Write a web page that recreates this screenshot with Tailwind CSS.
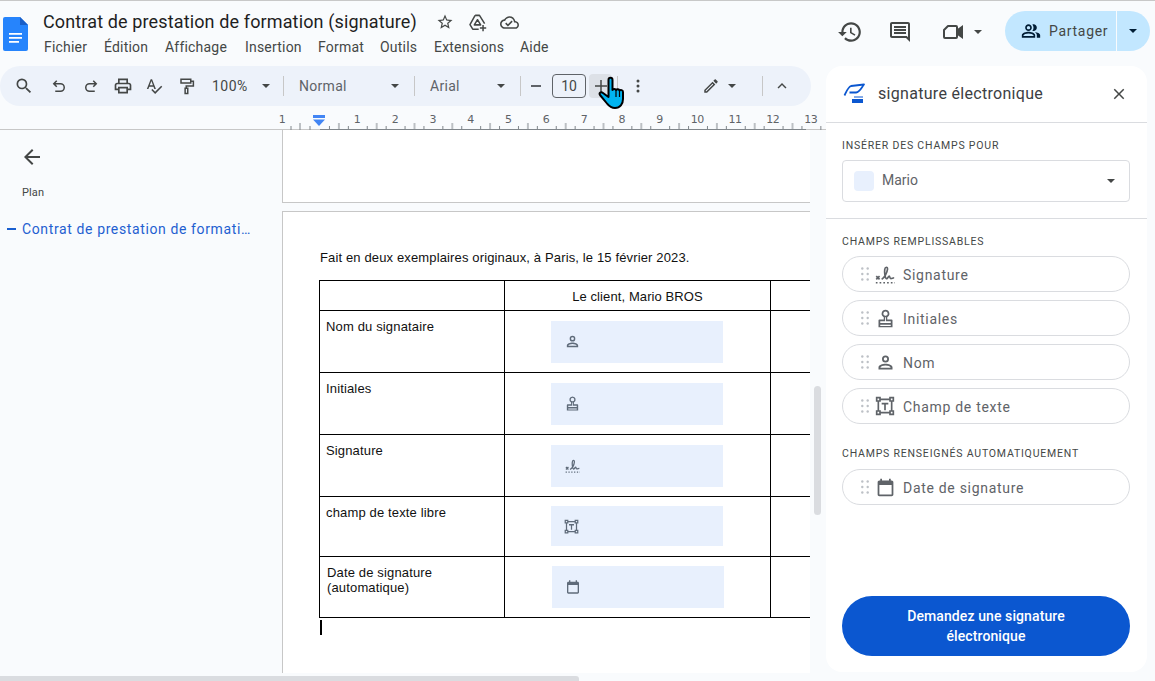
<!DOCTYPE html>
<html lang="fr">
<head>
<meta charset="utf-8">
<script src="https://cdn.jsdelivr.net/npm/@tailwindcss/browser@4"></script>
</head>
<body class="m-0">
<svg class="hidden" aria-hidden="true">
  <symbol id="caret" viewBox="0 0 8 4"><path d="M0 0h8L4 4z"/></symbol>
  <symbol id="person" viewBox="0 0 24 24"><path d="M12 4a4 4 0 1 1 0 8 4 4 0 0 1 0-8zm0 2a2 2 0 1 0 0 4 2 2 0 0 0 0-4zM12 13.500c3.500 0 8 1.600 8 4V20H4v-2.500c0-2.400 4.500-4 8-4zm0 2c-3 0-5.400 1-5.900 2.500h11.800c-.5-1.500-2.900-2.500-5.900-2.500z"/></symbol>
  <symbol id="stamp" viewBox="0 0 24 24"><path d="M12 2a4.500 4.500 0 0 1 2 8.500V13h5a1 1 0 0 1 1 1v8H4v-8a1 1 0 0 1 1-1h5v-2.500A4.500 4.500 0 0 1 12 2zm0 2a2.500 2.500 0 0 0-.5 4.950h1A2.500 2.500 0 0 0 12 4zM11.500 10.500V15H6v2h12v-2h-5.500v-4.500zM6 19v1.500h12V19z"/></symbol>
  <symbol id="sign" viewBox="0 0 24 24"><path d="M1.500 14.500l4 4M5.500 14.500l-4 4" fill="none" stroke="currentColor" stroke-width="2"/><path d="M8 18.500c3-2 6.500-7.500 7-12 .3-3.500-2.800-3.500-3.300 0-.5 3.500.3 10 1.800 11 1.500 1 2.500-3 3.500-3s.5 3 2 3 2.500-1 4-1" fill="none" stroke="currentColor" stroke-width="2"/><path d="M1 22.500h23" fill="none" stroke="currentColor" stroke-width="2" stroke-dasharray="2 2.500"/></symbol>
  <symbol id="textbox" viewBox="0 0 24 24"><path d="M1 1h6v2h10V1h6v6h-2v10h2v6h-6v-2H7v2H1v-6h2V7H1zm2 2v2h2V3zm16 0v2h2V3zM5 7v10h2v2h10v-2h2V7h-2V5H7v2zm-2 12v2h2v-2zm16 0v2h2v-2z"/><path d="M8 8h8v2.200h-3V17h-2v-6.800H8z"/></symbol>
  <symbol id="calendar" viewBox="0 0 24 24"><path d="M19 4h-1V2h-2v2H8V2H6v2H5c-1.100 0-2 .9-2 2v14c0 1.100.9 2 2 2h14c1.100 0 2-.9 2-2V6c0-1.100-.9-2-2-2zm0 16H5V9h14v11z"/></symbol>
  <symbol id="grip" viewBox="0 0 8 14"><g fill="currentColor"><circle cx="1.300" cy="1.500" r="1.200"/><circle cx="6.700" cy="1.500" r="1.200"/><circle cx="1.300" cy="7" r="1.200"/><circle cx="6.700" cy="7" r="1.200"/><circle cx="1.300" cy="12.500" r="1.200"/><circle cx="6.700" cy="12.500" r="1.200"/></g></symbol>
</svg>

<div class="relative w-[1155px] h-[681px] overflow-hidden bg-[#f9fbfd] border-t border-[#c8c8c8] text-[#444746] font-['Roboto',sans-serif] flex flex-col">

  <!-- Header -->
  <header class="h-[65px] shrink-0 flex items-start">
    <svg class="w-[25px] h-[34px] ml-[3px] mt-[16px] shrink-0" viewBox="0 0 25 34"><path d="M2 0h15l8 8v24a2 2 0 0 1-2 2H2a2 2 0 0 1-2-2V2a2 2 0 0 1 2-2z" fill="#2684fc"/><path d="M17 0l8 8h-8z" fill="#1a5fc8"/><path d="M6 16h13v1.700H6zM6 20h13v1.700H6zM6 24h10v1.700H6z" fill="#fff"/></svg>
    <div class="ml-[15px] w-[520px] shrink-0">
      <div class="flex items-center h-[24px] mt-[9px]">
        <span class="text-[18px] leading-[24px] tracking-[0.13px] text-[#1f1f1f] whitespace-nowrap w-[375px]">Contrat de prestation de formation (signature)</span>
        <svg class="w-[18px] h-[18px] ml-[18px] fill-[#444746]" viewBox="0 0 24 24"><path d="M22 9.240l-7.190-.62L12 2 9.190 8.630 2 9.240l5.460 4.730L5.820 21 12 17.270 18.180 21l-1.630-7.030L22 9.240zM12 15.400l-3.760 2.270 1-4.280-3.320-2.880 4.380-.38L12 6.100l1.710 4.040 4.380.38-3.320 2.880 1 4.280L12 15.400z"/></svg>
        <svg class="w-[19px] h-[19px] ml-[14px]" viewBox="0 0 24 24" fill="none" stroke="#444746" stroke-width="1.900" stroke-linejoin="round"><path d="M9 3h5.500L21 13.500M13.500 20.500H6l-3.500-5.700L9 3"/><path d="M12 8.500l4 6.500H8z"/><path d="M19 15v8M15 19h8"/></svg>
        <svg class="w-[19px] h-[19px] ml-[13px] fill-[#444746]" viewBox="0 0 24 24"><path d="M19.350 10.040C18.670 6.590 15.640 4 12 4 9.110 4 6.600 5.640 5.350 8.040 2.340 8.360 0 10.910 0 14c0 3.310 2.690 6 6 6h13c2.760 0 5-2.240 5-5 0-2.640-2.050-4.780-4.650-4.960zM19 18H6c-2.210 0-4-1.790-4-4 0-2.050 1.530-3.760 3.560-3.970l1.070-.11.5-.95C8.080 7.140 9.940 6 12 6c2.620 0 4.880 1.860 5.390 4.430l.3 1.500 1.530.11c1.560.1 2.780 1.410 2.780 2.960 0 1.650-1.350 3-3 3zm-9-3.820l-2.090-2.090L6.500 13.500 10 17l6.010-6.010-1.410-1.410z"/></svg>
      </div>
      <nav class="flex text-[14px] leading-[20px] text-[#444746] mt-[3px] ml-[1px] tracking-[0.2px]">
        <span class="w-[60px]">Fichier</span><span class="w-[61px]">Édition</span><span class="w-[80px]">Affichage</span><span class="w-[73px]">Insertion</span><span class="w-[62px]">Format</span><span class="w-[54px]">Outils</span><span class="w-[86px]">Extensions</span><span>Aide</span>
      </nav>
    </div>
    <div class="ml-[274px] mt-[18px] flex items-center">
      <svg class="w-[26px] h-[26px] fill-[#444746]" viewBox="0 0 24 24"><path d="M13 3c-4.970 0-9 4.030-9 9H1l3.890 3.890.07.14L9 12H6c0-3.870 3.130-7 7-7s7 3.130 7 7-3.130 7-7 7c-1.930 0-3.680-.79-4.940-2.060l-1.420 1.420C8.270 19.990 10.510 21 13 21c4.970 0 9-4.030 9-9s-4.030-9-9-9zm-1 5v5l4.280 2.540.72-1.210-3.500-2.080V8H12z"/></svg>
      <svg class="w-[24px] h-[24px] ml-[25px] fill-[#444746]" viewBox="0 0 24 24"><path d="M21.990 4c0-1.100-.89-2-1.990-2H4c-1.100 0-2 .9-2 2v12c0 1.100.9 2 2 2h14l4 4-.01-18zM20 4v13.170L18.830 16H4V4h16zM6 12h12v2H6zm0-3h12v2H6zm0-3h12v2H6z"/></svg>
      <svg class="w-[24px] h-[24px] ml-[29px]" viewBox="0 0 24 24" fill="none" stroke="#444746" stroke-width="2"><path d="M7 6h8a1 1 0 0 1 1 1v10a1 1 0 0 1-1 1H4a1 1 0 0 1-1-1v-7z" stroke-linejoin="round"/><path d="M16 10.500L21 7v10l-5-3.500z" fill="#444746"/></svg>
      <svg class="w-[8px] h-[4px] ml-[9px] fill-[#444746]"><use href="#caret"/></svg>
    </div>
    <div class="ml-[23px] mt-[10px] h-[40px] w-[145px] shrink-0 rounded-full bg-[#c2e7ff] flex items-center text-[#001d35]">
      <svg class="w-[20px] h-[20px] ml-[16px] fill-[#001d35]" viewBox="0 0 24 24"><path d="M16.670 13.130C18.040 14.060 19 15.320 19 17v3h4v-3c0-2.180-3.570-3.470-6.330-3.870zM15 12c2.210 0 4-1.790 4-4s-1.790-4-4-4c-.47 0-.91.1-1.330.26C14.500 5.230 15 6.560 15 8s-.5 2.770-1.330 3.740c.42.16.86.26 1.330.26zM9 12c2.210 0 4-1.790 4-4s-1.790-4-4-4-4 1.790-4 4 1.790 4 4 4zm0-6c1.100 0 2 .9 2 2s-.9 2-2 2-2-.9-2-2 .9-2 2-2zM9 13c-2.670 0-8 1.340-8 4v3h16v-3c0-2.660-5.330-4-8-4zm6 5H3v-.99C3.200 16.290 6.300 15 9 15s5.800 1.290 6 2v1z"/></svg>
      <span class="ml-[8px] w-[67px] text-[14px] tracking-[0.7px] text-[#444746]">Partager</span>
      <span class="w-px h-[40px] bg-[#f9fbfd]"></span>
      <svg class="w-[8px] h-[4px] ml-[12px] fill-[#001d35]"><use href="#caret"/></svg>
    </div>
  </header>

  <!-- Body -->
  <div class="flex-1 flex min-h-0">
    <div class="w-[826px] shrink-0 flex flex-col min-h-0">
      <!-- Toolbar -->
      <div class="w-[811px] h-[40px] shrink-0 rounded-full bg-[#edf2fa] flex items-center text-[14px]">
        <svg class="w-[20px] h-[20px] ml-[14px] fill-[#444746]" viewBox="0 0 24 24"><path d="M15.500 14h-.79l-.28-.27A6.471 6.471 0 0 0 16 9.500 6.500 6.500 0 1 0 9.500 16c1.610 0 3.090-.59 4.230-1.570l.27.28v.79l5 4.990L20.490 19l-4.990-5zm-6 0C7.010 14 5 11.990 5 9.500S7.010 5 9.500 5 14 7.010 14 9.500 11.990 14 9.500 14z"/></svg>
        <svg class="w-[18px] h-[18px] ml-[16px]" viewBox="0 0 24 24" fill="none" stroke="#444746" stroke-width="2"><path d="M9 5L5 9l4 4M5 9h9a5 5 0 0 1 0 10H7"/></svg>
        <svg class="w-[18px] h-[18px] ml-[14px]" viewBox="0 0 24 24" fill="none" stroke="#444746" stroke-width="2"><path d="M15 5l4 4-4 4M19 9h-9a5 5 0 0 0 0 10h7"/></svg>
        <svg class="w-[20px] h-[20px] ml-[13px] fill-[#444746]" viewBox="0 0 24 24"><path d="M19 8h-1V3H6v5H5c-1.660 0-3 1.340-3 3v6h4v4h12v-4h4v-6c0-1.660-1.340-3-3-3zM8 5h8v3H8V5zm8 12v2H8v-4h8v2zm2-2v-2H6v2H4v-4c0-.55.45-1 1-1h14c.55 0 1 .45 1 1v4h-2z"/></svg>
        <svg class="w-[18px] h-[18px] ml-[12px] fill-[#444746]" viewBox="0 0 24 24"><path d="M12.450 16h2.090L9.430 3H7.570L2.460 16h2.090l1.120-3h5.640l1.140 3zm-6.020-5L8.500 5.480 10.570 11H6.430zm15.160.59l-8.090 8.090L9.830 16l-1.410 1.410 5.090 5.090L23 13l-1.410-1.410z"/></svg>
        <svg class="w-[18px] h-[18px] ml-[15px]" viewBox="0 0 24 24" fill="none" stroke="#444746" stroke-width="2"><path d="M4 3h13v5H4zM17 5.500h3.500V12H11v3M9.500 15h3.500v7H9.500z"/></svg>
        <span class="ml-[16px] w-[36px] tracking-[0.5px] leading-none">100%</span>
        <svg class="w-[8px] h-[4px] ml-[14px] fill-[#444746]"><use href="#caret"/></svg>
        <span class="ml-[13px] w-px h-[20px] bg-[#c7c7c7]"></span>
        <span class="ml-[15px] w-[48px] tracking-[0.3px] text-[#5f6368]">Normal</span>
        <svg class="w-[8px] h-[4px] ml-[44px] fill-[#444746]"><use href="#caret"/></svg>
        <span class="ml-[15px] w-px h-[20px] bg-[#c7c7c7]"></span>
        <span class="ml-[15px] w-[30px] tracking-[0.3px] text-[#5f6368]">Arial</span>
        <svg class="w-[8px] h-[4px] ml-[37px] fill-[#444746]"><use href="#caret"/></svg>
        <span class="ml-[15px] w-px h-[20px] bg-[#c7c7c7]"></span>
        <span class="ml-[10px] w-[10px] h-[2px] bg-[#5f6368]"></span>
        <span class="ml-[11px] w-[34px] h-[24px] rounded-[4px] border border-[#5f6368] flex items-center justify-center text-[14px] leading-none">10</span>
        <span class="ml-[3px] w-[23px] h-[24px] rounded-[4px] bg-[#dde1e7] flex items-center justify-center">
          <svg class="w-[12px] h-[12px] stroke-[#444746]" viewBox="0 0 12 12" stroke-width="1.500"><path d="M6 0v12M0 6h12"/></svg>
        </span>
        <span class="ml-[5px] w-px h-[20px] bg-[#c7c7c7]"></span>
        <svg class="w-[4px] h-[14px] ml-[18px] fill-[#444746]" viewBox="0 0 4 14"><circle cx="2" cy="2" r="1.500"/><circle cx="2" cy="7" r="1.500"/><circle cx="2" cy="12" r="1.500"/></svg>
        <svg class="w-[18px] h-[18px] ml-[62px] fill-[#444746]" viewBox="0 0 24 24"><path d="M3 17.250V21h3.750L17.810 9.940l-3.750-3.750L3 17.250zM5.920 19H5v-.92l9.060-9.060.92.92L5.920 19zM20.710 5.630l-2.340-2.340c-.39-.39-1.020-.39-1.410 0l-1.830 1.830 3.750 3.750 1.830-1.830c.39-.39.39-1.020 0-1.410z"/></svg>
        <svg class="w-[8px] h-[4px] ml-[8px] fill-[#444746]"><use href="#caret"/></svg>
        <span class="ml-[26px] w-px h-[20px] bg-[#c7c7c7]"></span>
        <svg class="w-[18px] h-[18px] ml-[10px] fill-[#444746]" viewBox="0 0 24 24"><path d="M7.410 15.410L12 10.830l4.590 4.580L18 14l-6-6-6 6z"/></svg>
      </div>

      <!-- Ruler -->
      <div class="relative h-[24px] shrink-0 border-b border-[#c7c7c7]">
        <div class="flex w-[860px] h-[14px] mt-[7px] text-[11px] leading-[14px] text-[#5f6368] font-['DejaVu_Sans',sans-serif] tracking-[-0.5px]">
          <span class="ml-[263px] w-[38px] text-center">1</span>
          <span class="ml-[37px] w-[38px] text-center">1</span><span class="w-[37.800px] text-center">2</span><span class="w-[37.800px] text-center">3</span><span class="w-[37.800px] text-center">4</span><span class="w-[37.800px] text-center">5</span><span class="w-[37.800px] text-center">6</span><span class="w-[37.800px] text-center">7</span><span class="w-[37.800px] text-center">8</span><span class="w-[37.800px] text-center">9</span><span class="w-[37.800px] text-center">10</span><span class="w-[37.800px] text-center">11</span><span class="w-[37.800px] text-center">12</span><span class="w-[37.800px] text-center">13</span>
        </div>
        <svg class="absolute left-0 bottom-[-1px] w-[826px] h-[10px]" viewBox="0 0 826 10">
          <defs><pattern id="t" x="320" y="0" width="37.800" height="10" patternUnits="userSpaceOnUse"><path d="M9.450 6v4M18.900 3v7M28.350 6v4" stroke="#80868b"/></pattern></defs>
          <rect x="320" width="506" height="10" fill="url(#t)"/>
          <path d="M291 6v4M300 3v7M310 6v4" stroke="#80868b"/>
          <path d="M320 9.500h486" stroke="#80868b"/>
        </svg>
        <svg class="absolute left-[312px] top-[9px] w-[14px] h-[13px]" viewBox="0 0 14 13"><path d="M1 0h12v3H1z" fill="#4285f4"/><path d="M1 4.500h12L7 11z" fill="#4285f4"/></svg>
      </div>

      <!-- Main -->
      <div class="flex-1 flex min-h-0">
        <aside class="w-[282px] shrink-0 relative">
          <svg class="w-[24px] h-[24px] ml-[20px] mt-[15px] fill-[#444746]" viewBox="0 0 24 24"><path d="M20 11H7.830l5.590-5.590L12 4l-8 8 8 8 1.410-1.410L7.830 13H20v-2z"/></svg>
          <div class="ml-[22px] mt-[16px] text-[11px] leading-[16px] text-[#444746] tracking-[0.1px]">Plan</div>
          <div class="flex items-center mt-[18px] h-[20px]">
            <span class="ml-[7px] w-[9px] h-[2px] bg-[#1a5fd0]"></span>
            <span class="ml-[6px] text-[14px] tracking-[0.62px] text-[#1f5fd1] whitespace-nowrap">Contrat de prestation de formati…</span>
          </div>
        </aside>
        <div class="w-[528px] shrink-0 overflow-hidden text-[#111] font-['Liberation_Sans',Arial,sans-serif] text-[13px] leading-[16px]">
          <div class="h-[73px] bg-white border-l border-b border-[#c7c7c7]"></div>
          <div class="h-[462px] mt-[8px] bg-white border-l border-t border-[#c7c7c7] pl-[36px] pt-[38px]">
            <p class="h-[15px] ml-[1px] whitespace-nowrap tracking-[0.14px]">Fait en deux exemplaires originaux, à Paris, le 15 février 2023.</p>
            <table class="mt-[15px] border-collapse table-fixed w-[560px]">
              <colgroup><col class="w-[185px]"><col class="w-[266px]"><col></colgroup>
              <tr class="h-[30px]"><td class="border border-black"></td><td class="border border-black text-center pt-[2px] tracking-[0.1px]">Le client, Mario BROS</td><td class="border border-black"></td></tr>
              <tr class="h-[62px]"><td class="border border-black align-top pl-[6px] pt-[8px] tracking-[0.15px]">Nom du signataire</td><td class="border border-black pl-[46px]"><div class="h-[42px] w-[172px] bg-[#e8f0fd] flex items-center pl-[13px] text-[#5f6b7a]"><svg class="w-[17px] h-[17px] fill-current"><use href="#person"/></svg></div></td><td class="border border-black"></td></tr>
              <tr class="h-[62px]"><td class="border border-black align-top pl-[6px] pt-[8px] tracking-[0.15px]">Initiales</td><td class="border border-black pl-[46px]"><div class="h-[42px] w-[172px] bg-[#e8f0fd] flex items-center pl-[13px] text-[#5f6b7a]"><svg class="w-[17px] h-[17px] fill-current"><use href="#stamp"/></svg></div></td><td class="border border-black"></td></tr>
              <tr class="h-[62px]"><td class="border border-black align-top pl-[6px] pt-[8px] tracking-[0.15px]">Signature</td><td class="border border-black pl-[46px]"><div class="h-[42px] w-[172px] bg-[#e8f0fd] flex items-center pl-[14px] text-[#5f6b7a]"><svg class="w-[15px] h-[15px] fill-current"><use href="#sign"/></svg></div></td><td class="border border-black"></td></tr>
              <tr class="h-[60px]"><td class="border border-black align-top pl-[6px] pt-[8px] tracking-[0.15px]">champ de texte libre</td><td class="border border-black pl-[46px] pb-[1px]"><div class="h-[40px] w-[172px] bg-[#e8f0fd] flex items-center pl-[13px] text-[#5f6b7a]"><svg class="w-[15px] h-[15px] fill-current"><use href="#textbox"/></svg></div></td><td class="border border-black"></td></tr>
              <tr class="h-[61px]"><td class="border border-black align-top pl-[7px] pt-[8px] tracking-[0.15px] leading-[15px]">Date de signature<br>(automatique)</td><td class="border border-black pl-[47px]"><div class="h-[42px] w-[172px] bg-[#e8f0fd] flex items-center pl-[13px] text-[#5f6b7a]"><svg class="w-[16px] h-[16px] fill-current"><use href="#calendar"/></svg></div></td><td class="border border-black"></td></tr>
            </table>
            <div class="w-[2px] h-[15px] bg-black mt-[2px] ml-[1px]"></div>
          </div>
        </div>
        <div class="ml-[4px] mt-[256px] w-[7px] h-[129px] rounded-full bg-[#dadce0] shrink-0"></div>
      </div>
    </div>

    <!-- Side panel -->
    <aside class="w-[321px] mb-[9px] shrink-0 bg-white rounded-[16px] flex flex-col">
      <div class="h-[57px] shrink-0 border-b border-[#dadce0] flex items-center pl-[17px] pr-[19px]">
        <svg class="w-[24px] h-[24px] shrink-0" viewBox="0 0 24 24" fill="none"><path d="M1.500 13.500C3.500 9.500 5 5 8 4l13-1.500C18.500 5.500 17 10 13 10.500H6.500" stroke="#0b57d0" stroke-width="1.800" stroke-linejoin="round"/><path d="M11 15h9" stroke="#0b57d0" stroke-width="1"/><path d="M9 17h11v4H9z" fill="#0b57d0"/></svg>
        <span class="ml-[11px] text-[16px] tracking-[0.3px] text-[#3c4043] flex-1">signature électronique</span>
        <svg class="w-[18px] h-[18px] fill-[#444746]" viewBox="0 0 24 24"><path d="M19 6.410L17.590 5 12 10.590 6.410 5 5 6.410 10.590 12 5 17.590 6.410 19 12 13.410 17.590 19 19 17.590 13.410 12z"/></svg>
      </div>
      <div class="h-[96px] shrink-0 border-b border-[#dadce0] pl-[16px] pr-[17px]">
        <div class="mt-[15px] text-[10.500px] leading-[16px] tracking-[0.8px] text-[#444746]">INSÉRER DES CHAMPS POUR</div>
        <div class="mt-[6px] h-[42px] border border-[#dadce0] rounded-[4px] flex items-center pl-[11px] pr-[14px]">
          <span class="w-[20px] h-[20px] rounded-[4px] bg-[#e8f0fd]"></span>
          <span class="ml-[8px] flex-1 text-[14px] leading-[18px] pb-[2px] text-[#5f6368]">Mario</span>
          <svg class="w-[8px] h-[4px] fill-[#444746]"><use href="#caret"/></svg>
        </div>
      </div>
      <div class="pl-[16px] pr-[17px] flex-1 flex flex-col">
        <div class="mt-[15px] text-[10.500px] leading-[16px] tracking-[0.8px] text-[#444746]">CHAMPS REMPLISSABLES</div>
        <div class="mt-[6px] flex flex-col gap-[8px]">
          <div class="h-[36px] rounded-full border border-[#dadce0] flex items-center text-[14px] tracking-[0.7px] text-[#5f6368]"><svg class="w-[8px] h-[14px] ml-[18px] text-[#bdc1c6]"><use href="#grip"/></svg><span class="w-[34px] flex justify-center pr-[2px]"><svg class="w-[20px] h-[20px] fill-current"><use href="#sign"/></svg></span><span class="pt-[2px]">Signature</span></div>
          <div class="h-[36px] rounded-full border border-[#dadce0] flex items-center text-[14px] tracking-[0.7px] text-[#5f6368]"><svg class="w-[8px] h-[14px] ml-[18px] text-[#bdc1c6]"><use href="#grip"/></svg><span class="w-[34px] flex justify-center pr-[2px]"><svg class="w-[21px] h-[21px] fill-current"><use href="#stamp"/></svg></span><span class="pt-[2px]">Initiales</span></div>
          <div class="h-[36px] rounded-full border border-[#dadce0] flex items-center text-[14px] tracking-[0.7px] text-[#5f6368]"><svg class="w-[8px] h-[14px] ml-[18px] text-[#bdc1c6]"><use href="#grip"/></svg><span class="w-[34px] flex justify-center pr-[2px]"><svg class="w-[21px] h-[21px] fill-current"><use href="#person"/></svg></span><span class="pt-[2px]">Nom</span></div>
          <div class="h-[36px] rounded-full border border-[#dadce0] flex items-center text-[14px] tracking-[0.7px] text-[#5f6368]"><svg class="w-[8px] h-[14px] ml-[18px] text-[#bdc1c6]"><use href="#grip"/></svg><span class="w-[34px] flex justify-center pr-[2px]"><svg class="w-[20px] h-[20px] fill-current"><use href="#textbox"/></svg></span><span class="pt-[2px]">Champ de texte</span></div>
        </div>
        <div class="mt-[22px] text-[10.500px] leading-[16px] tracking-[0.8px] text-[#444746]">CHAMPS RENSEIGNÉS AUTOMATIQUEMENT</div>
        <div class="mt-[7px] h-[36px] rounded-full border border-[#dadce0] flex items-center text-[14px] tracking-[0.7px] text-[#5f6368]"><svg class="w-[8px] h-[14px] ml-[18px] text-[#bdc1c6]"><use href="#grip"/></svg><span class="w-[34px] flex justify-center pr-[2px]"><svg class="w-[21px] h-[21px] fill-current"><use href="#calendar"/></svg></span><span class="pt-[2px]">Date de signature</span></div>
        <button class="mt-auto mb-[16px] h-[60px] rounded-full bg-[#0b57d0] text-white text-[14px] font-medium tracking-[0.1px] leading-[20px] px-[50px] text-center">Demandez une signature électronique</button>
      </div>
    </aside>
  </div>

  <!-- Horizontal scrollbar -->
  <div class="absolute left-0 bottom-0 w-[579px] h-[5px] bg-[#dadce0] rounded-tr-[3px]"></div>

  <!-- Hand cursor -->
  <svg class="absolute left-[598px] top-[74px] w-[29px] h-[35px]" viewBox="0 0 29 35"><path d="M10.500 5c0-3 4-3 4 0v10c1-1.500 3-1.500 3.500 0 1-1.200 3-1 3.500.5 1-1 3.500-.5 3.500 1.500v7c0 5-3 9-8 9-4.500 0-6-2-8-4.500l-7-8.500c-1.500-2 1-3.500 3-2l5.500 4z" fill="#00b4f0" stroke="#000" stroke-width="2" stroke-linejoin="round"/><path d="M18 15v7M21.500 15.500V22" stroke="#000" stroke-width="1.200"/></svg>
</div>
</body>
</html>
